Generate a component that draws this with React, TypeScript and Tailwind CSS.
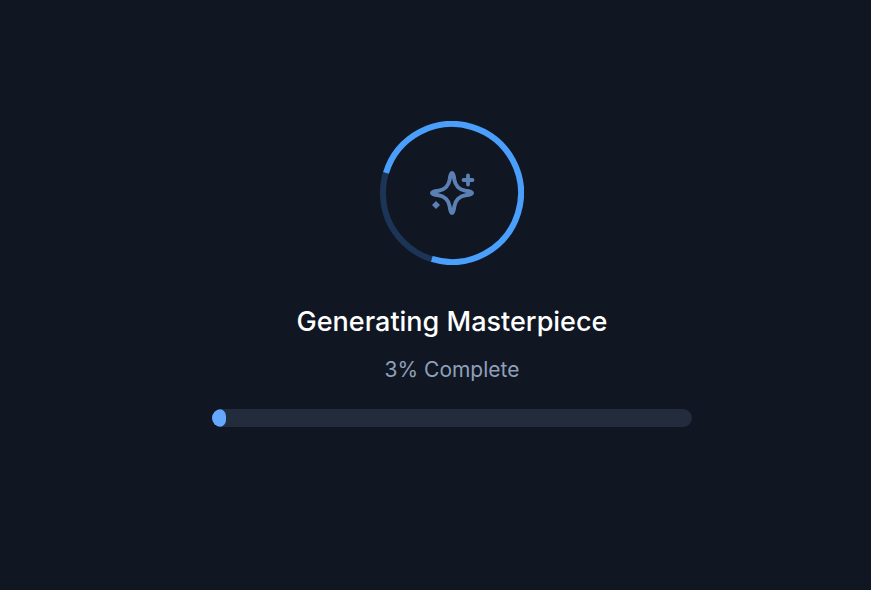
import React from 'react'

const progress = 3

function SparkleIcon() {
  return (
    <svg viewBox="0 0 48 48" className="w-12 h-12 text-[#5b80b4]" fill="none" stroke="currentColor" strokeLinecap="round" strokeLinejoin="round">
      <path
        strokeWidth="4"
        d="M24 4C25.4 4 25.9 7 26.3 10.5C27.2 16.5 31.5 20.8 37.5 21.7C41 22.1 44 22.6 44 24C44 25.4 41 25.9 37.5 26.3C31.5 27.2 27.2 31.5 26.3 37.5C25.9 41 25.4 44 24 44C22.6 44 22.1 41 21.7 37.5C20.8 31.5 16.5 27.2 10.5 26.3C7 25.9 4 25.4 4 24C4 22.6 7 22.1 10.5 21.7C16.5 20.8 20.8 16.5 21.7 10.5C22.1 7 22.6 4 24 4Z"
      />
      <path strokeWidth="3.8" d="M40 6.5V15.5M35.5 11H44.5" />
      <path fill="currentColor" stroke="none" d="M8 32L12 36L8 40L4 36Z" />
    </svg>
  )
}

function ProgressRing() {
  return (
    <div className="relative w-[144px] h-[144px]">
      <svg viewBox="0 0 144 144" className="w-full h-full">
        <circle cx="72" cy="72" r="69" fill="none" stroke="#1c3557" strokeWidth="6" />
        <circle
          cx="72"
          cy="72"
          r="69"
          fill="none"
          stroke="#4a9efc"
          strokeWidth="6"
          pathLength={100}
          strokeDasharray="75 25"
          transform="rotate(197 72 72)"
        />
      </svg>
      <div className="absolute inset-0 flex items-center justify-center">
        <SparkleIcon />
      </div>
    </div>
  )
}

export default function App() {
  return (
    <div className="min-h-screen bg-[#101723] flex flex-col items-center pt-[121px] pl-[33px] font-['Inter',sans-serif]">
      <ProgressRing />

      <h1 className="mt-[39px] text-[27px] leading-[36px] font-medium text-white">Generating Masterpiece</h1>
      <p className="mt-[16px] text-[21px] leading-[28px] text-[#8f9fb8]">{progress}% Complete</p>

      {/* Progress bar */}
      <div className="mt-[25px] w-[480px] h-[18px] rounded-full bg-[#222c3c] overflow-hidden">
        <div className="h-full rounded-full bg-[#64a8ff]" style={{ width: `${progress}%` }} />
      </div>
    </div>
  )
}
